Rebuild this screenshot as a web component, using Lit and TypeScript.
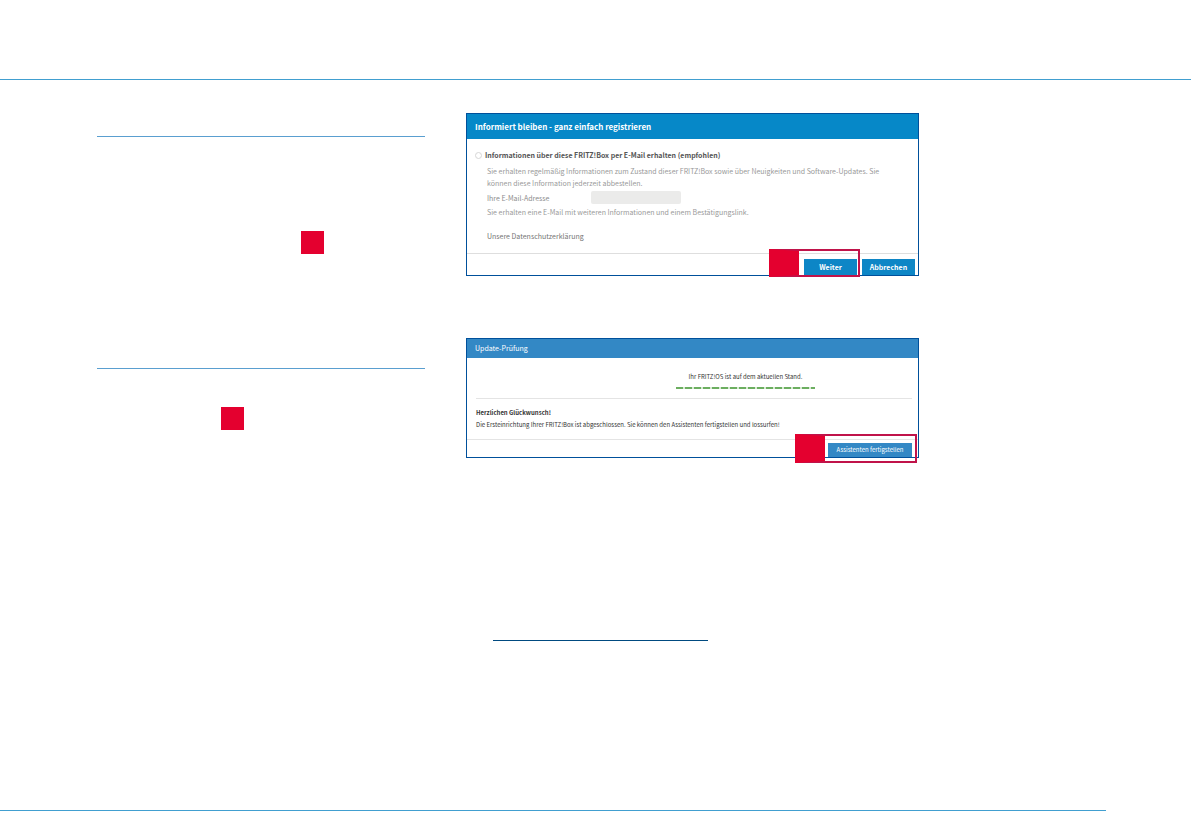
import { LitElement, html, css } from "lit";
import { customElement } from "lit/decorators.js";

const base = css`
  :host {
    display: block;
    box-sizing: border-box;
    font-family: "Noto Sans CJK SC", "Open Sans", sans-serif;
  }
  * {
    box-sizing: border-box;
  }
  h2,
  h3,
  p {
    margin: 0;
  }
  button {
    font: inherit;
    border: 0;
    padding: 0;
    color: #fff;
    white-space: nowrap;
  }
  .callout {
    position: absolute;
    border: 2px solid #c0134a;
    border-left: 30px solid #e4002f;
    pointer-events: none;
  }
`;

@customElement("register-dialog")
class RegisterDialog extends LitElement {
  static styles = [
    base,
    css`
      .dialog {
        border: 1px solid #00509b;
        background: #fff;
        font-size: 7px;
        line-height: 12px;
        color: #999;
      }
      .title {
        background: #0688c8;
        color: #fff;
        font-size: 8px;
        font-weight: 700;
        line-height: 25px;
        padding: 0 8px;
      }
      .body {
        padding: 10px 20px 11px 8px;
      }
      .option {
        display: flex;
        align-items: center;
        gap: 3px;
        font-weight: 700;
        color: #555;
      }
      .radio {
        appearance: none;
        width: 7px;
        height: 7px;
        margin: 0;
        border: 1px solid #d6d6d6;
        border-radius: 50%;
      }
      .details {
        padding: 4px 0 0 12px;
      }
      .field {
        display: flex;
        align-items: center;
        padding: 2px 0;
      }
      .label {
        width: 104px;
        color: #8c8c8c;
      }
      .input {
        width: 90px;
        height: 13px;
        border: 0;
        border-radius: 2px;
        background: #ebebea;
        font: inherit;
      }
      .privacy {
        display: block;
        margin-top: 12px;
        color: #747474;
        text-decoration: none;
      }
      .actions {
        position: relative;
        display: flex;
        justify-content: flex-end;
        gap: 5px;
        border-top: 1px solid #dedede;
        padding: 5px 3px 0 0;
      }
      .button {
        width: 53px;
        height: 16px;
        background: #0d86c6;
        font-weight: 700;
        line-height: 16px;
      }
      .callout {
        top: -5px;
        right: 58px;
        width: 91px;
        height: 28px;
      }
    `,
  ];

  render() {
    return html`
      <section class="dialog">
        <h2 class="title">Informiert bleiben - ganz einfach registrieren</h2>
        <div class="body">
          <label class="option">
            <input class="radio" type="radio" name="mail" />
            Informationen über diese FRITZ!Box per E-Mail erhalten (empfohlen)
          </label>
          <div class="details">
            <p>
              Sie erhalten regelmäßig Informationen zum Zustand dieser FRITZ!Box
              sowie über Neuigkeiten und Software-Updates. Sie<br />
              können diese Information jederzeit abbestellen.
            </p>
            <div class="field">
              <label class="label" for="mail">Ihre E-Mail-Adresse</label>
              <input class="input" id="mail" type="email" />
            </div>
            <p>
              Sie erhalten eine E-Mail mit weiteren Informationen und einem
              Bestätigungslink.
            </p>
            <a class="privacy" href="#">Unsere Datenschutzerklärung</a>
          </div>
        </div>
        <div class="actions">
          <button class="button" type="button">Weiter</button>
          <button class="button" type="button">Abbrechen</button>
          <span class="callout"></span>
        </div>
      </section>
    `;
  }
}

@customElement("update-dialog")
class UpdateDialog extends LitElement {
  static styles = [
    base,
    css`
      .dialog {
        border: 1px solid #00509b;
        background: #fff;
        font-size: 6px;
        line-height: 12px;
        color: #333;
      }
      .title {
        background: #3388c5;
        color: #fff;
        font-size: 7px;
        font-weight: 400;
        line-height: 19px;
        padding: 0 8px;
      }
      .body {
        padding: 13px 6px 8px 9px;
      }
      .status {
        display: flex;
        flex-direction: column;
        align-items: center;
        width: 139px;
        margin-left: 200px;
      }
      .progress {
        width: 100%;
        height: 2px;
        margin-top: 4px;
        background: repeating-linear-gradient(
          90deg,
          #6cae60 0 7px,
          #d8ead4 7px 9px
        );
      }
      .message {
        margin-top: 9px;
        border-top: 1px solid #e4e4e4;
        padding-top: 7px;
      }
      .heading {
        font-size: 6px;
        font-weight: 700;
        line-height: 13px;
      }
      .actions {
        position: relative;
        display: flex;
        justify-content: flex-end;
        border-top: 1px solid #e4e4e4;
        padding: 3px 6px 0 0;
      }
      .button {
        width: 84px;
        height: 14px;
        background: #3388c5;
        line-height: 14px;
      }
      .callout {
        top: -6px;
        right: 1px;
        width: 122px;
        height: 29px;
      }
    `,
  ];

  render() {
    return html`
      <section class="dialog">
        <h2 class="title">Update-Prüfung</h2>
        <div class="body">
          <div class="status">
            <p>Ihr FRITZ!OS ist auf dem aktuellen Stand.</p>
            <div class="progress"></div>
          </div>
          <div class="message">
            <h3 class="heading">Herzlichen Glückwunsch!</h3>
            <p>
              Die Ersteinrichtung Ihrer FRITZ!Box ist abgeschlossen. Sie können
              den Assistenten fertigstellen und lossurfen!
            </p>
          </div>
        </div>
        <div class="actions">
          <button class="button" type="button">Assistenten fertigstellen</button>
          <span class="callout"></span>
        </div>
      </section>
    `;
  }
}

@customElement("app-root")
class AppRoot extends LitElement {
  static styles = [
    base,
    css`
      :host {
        display: flex;
        flex-direction: column;
        min-height: 100vh;
        background: #fff;
      }
      .header {
        height: 80px;
        border-bottom: 1px solid #419fd0;
      }
      .content {
        flex: 1;
        display: grid;
        grid-template-columns: minmax(0, 328fr) minmax(0, 453fr);
        align-items: start;
        column-gap: 41px;
        padding: 33px 272px 0 97px;
      }
      .steps {
        display: flex;
        flex-direction: column;
        padding-top: 23px;
      }
      .step {
        border-top: 1px solid #5a9fd0;
      }
      .register {
        height: 232px;
        padding: 94px 0 0 204px;
      }
      .finish {
        padding: 38px 0 0 124px;
      }
      .marker {
        width: 23px;
        height: 23px;
        background: #e4002f;
      }
      .figures {
        display: flex;
        flex-direction: column;
        gap: 62px;
      }
      .underline {
        width: 215px;
        margin: 120px 0 0 27px;
        border-top: 1px solid #004a80;
      }
      .footer {
        height: 29px;
        margin-right: 85px;
        border-top: 1px solid #419fd0;
      }
    `,
  ];

  render() {
    return html`
      <header class="header"></header>
      <main class="content">
        <div class="steps">
          <section class="step register"><div class="marker"></div></section>
          <section class="step finish"><div class="marker"></div></section>
        </div>
        <div class="figures">
          <register-dialog></register-dialog>
          <update-dialog></update-dialog>
          <div class="underline"></div>
        </div>
      </main>
      <footer class="footer"></footer>
    `;
  }
}
